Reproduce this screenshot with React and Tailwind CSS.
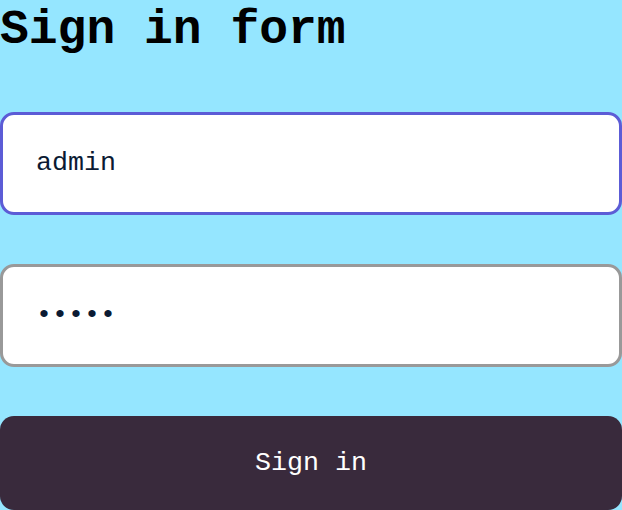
import React from 'react';

export default function App() {
  return (
    <div className="min-h-[510px] w-[622px] bg-[#95e6ff] font-['Liberation_Mono',monospace]">
      <h1 className="m-0 pt-[2px] text-[48px] font-bold leading-[1.2] text-black">Sign in form</h1>
      <form className="mt-[52px] flex flex-col">
        <input
          type="text"
          defaultValue="admin"
          className="h-[103px] w-full rounded-[14px] border-[3px] border-[#5c5cd6] bg-white px-[33px] text-[26.67px] text-[#0b1a33] outline-none"
        />
        <input
          type="password"
          defaultValue="admin"
          className="mt-[49px] h-[103px] w-full rounded-[14px] border-[3px] border-[#999999] bg-white px-[33px] text-[26.67px] text-[#0b1a33] outline-none"
        />
        <button
          type="button"
          className="mt-[49px] h-[94px] w-full rounded-[14px] bg-[#392a3c] text-[26.67px] text-white"
        >
          Sign in
        </button>
      </form>
    </div>
  );
}
